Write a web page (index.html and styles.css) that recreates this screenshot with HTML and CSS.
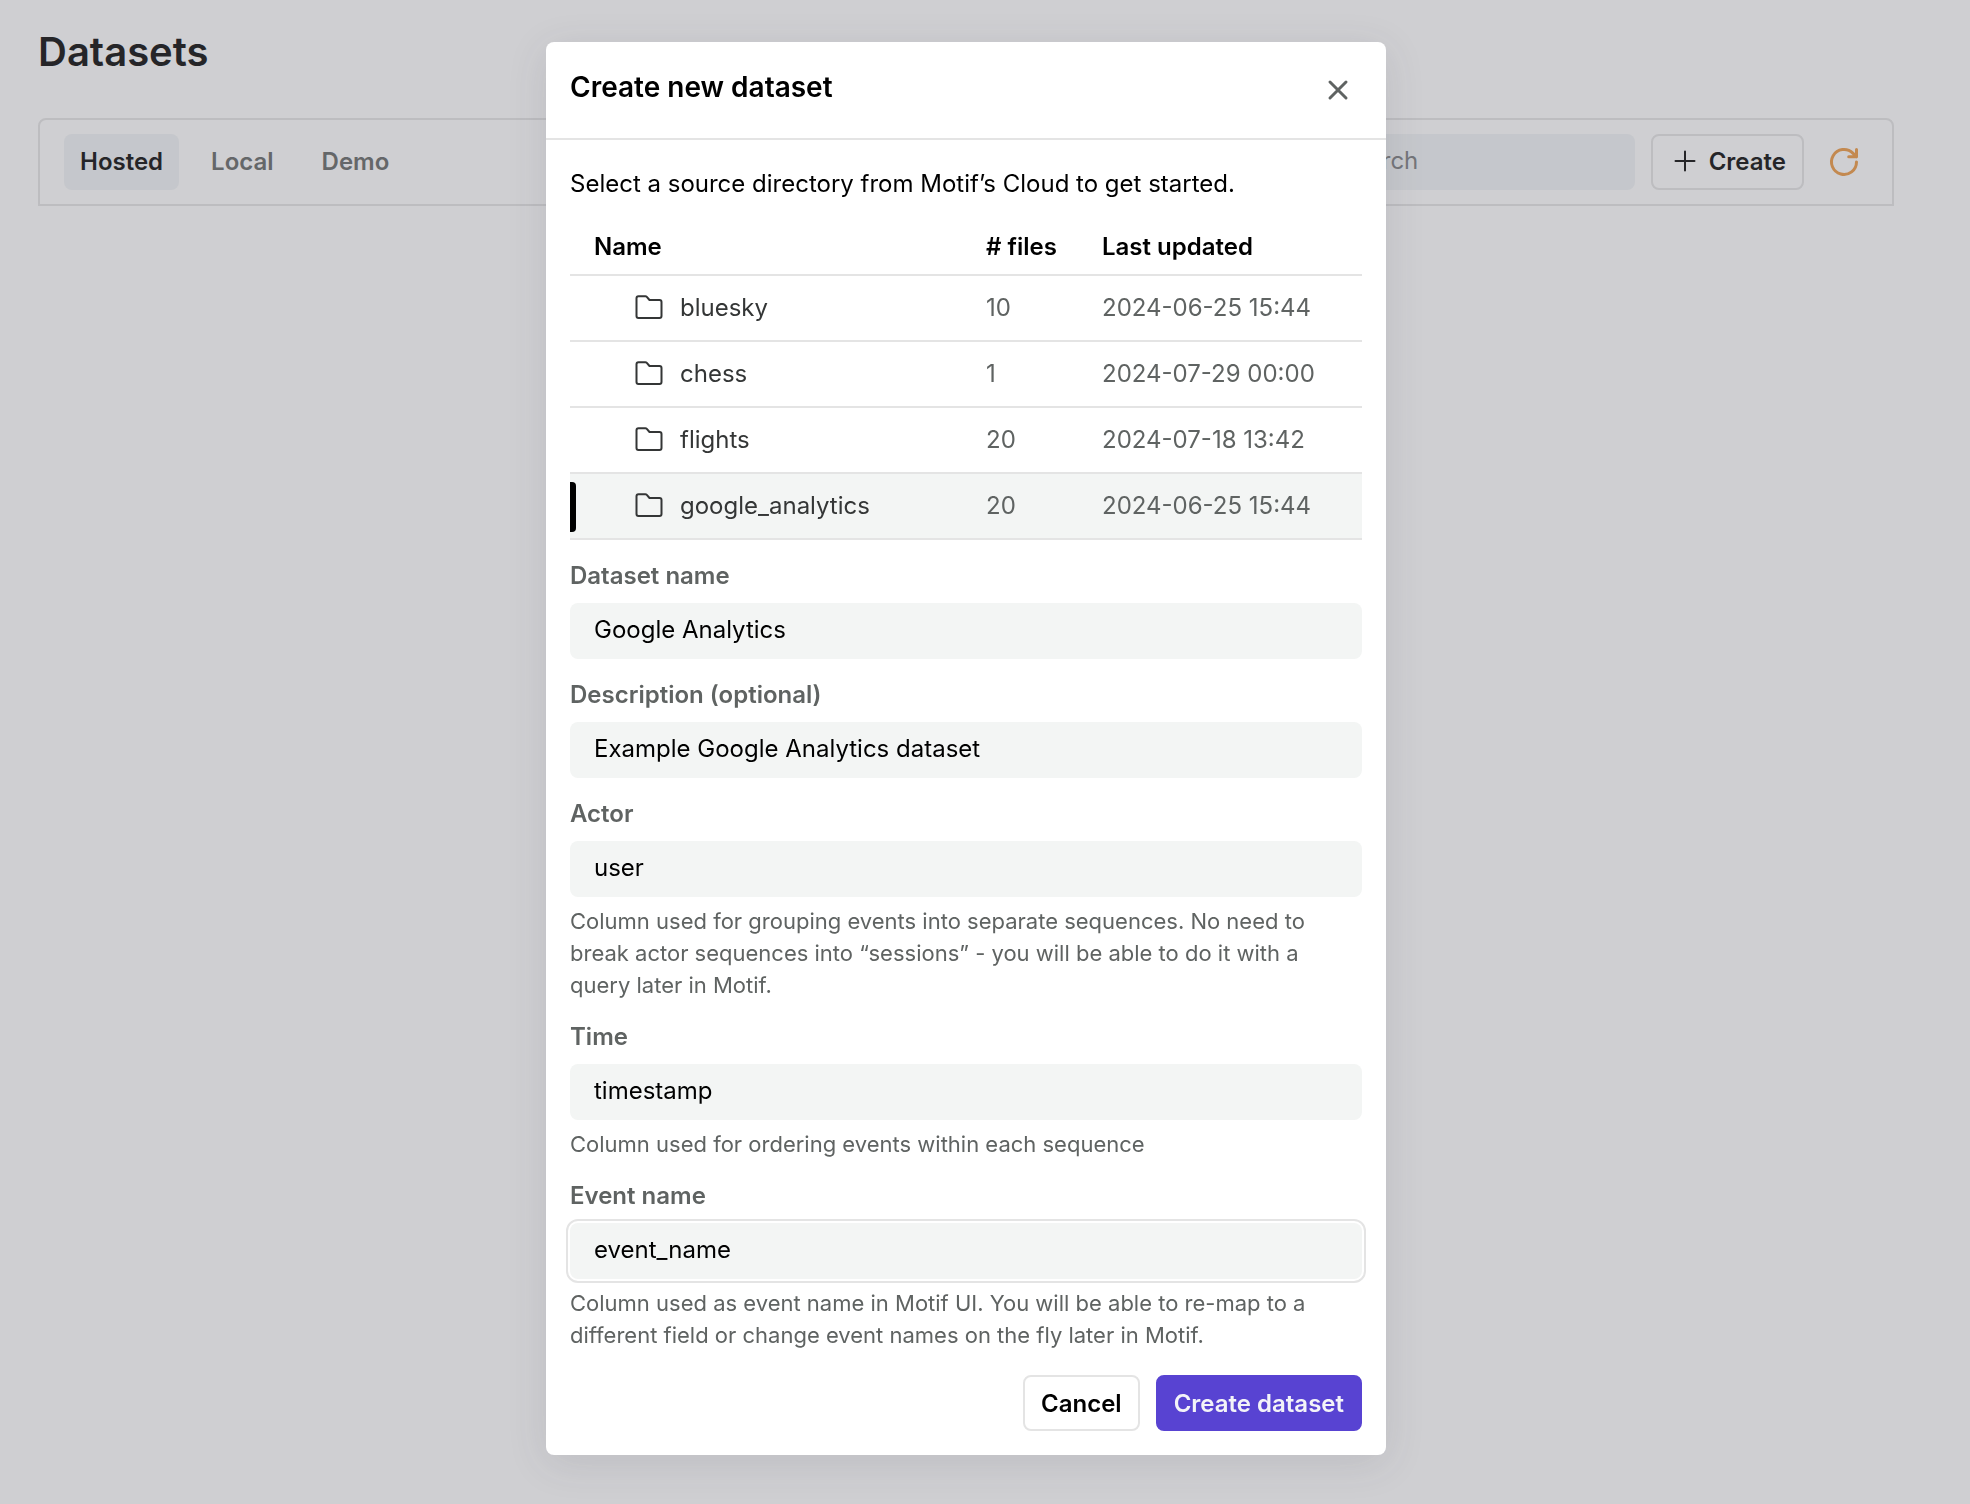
FILE: index.html
```html
<!DOCTYPE html>
<html lang="en">
<head>
<meta charset="utf-8">
<title>Datasets</title>
<link rel="stylesheet" href="styles.css">
</head>
<body>
<svg class="sprite" aria-hidden="true">
  <symbol id="folder" viewBox="0 0 30 32">
    <path d="M2.500 8V25a2 2 0 0 0 2 2h21a2 2 0 0 0 2-2V11a2 2 0 0 0-2-2H15.500l-2.700-3.100A2 2 0 0 0 11.300 5.200H4.500a2 2 0 0 0-2 2z"/>
  </symbol>
</svg>
<main class="page">
  <h1 class="page-title">Datasets</h1>
  <div class="toolbar">
    <nav class="tabs">
      <button class="tab tab-active" type="button">Hosted</button>
      <button class="tab" type="button">Local</button>
      <button class="tab" type="button">Demo</button>
    </nav>
    <input class="search" type="search" placeholder="Search" aria-label="Search datasets">
    <button class="button button-icon" type="button">
      <svg class="plus" viewBox="0 0 24 24" aria-hidden="true"><path d="M12 2.500v19M2.500 12h19"/></svg>
      Create
    </button>
    <button class="refresh" type="button" aria-label="Refresh">
      <svg class="refresh-icon" viewBox="0 0 32 32" aria-hidden="true"><path d="M28.500 16A12.500 12.500 0 1 1 24.800 7.100L28.500 10.800M28.500 3.500v7.300h-7.800"/></svg>
    </button>
  </div>
</main>
<div class="overlay">
  <form class="modal" role="dialog" aria-modal="true" aria-labelledby="modal-title">
    <header class="modal-header">
      <h2 class="modal-title" id="modal-title">Create new dataset</h2>
      <button class="close" type="button" aria-label="Close">
        <svg class="close-icon" viewBox="0 0 24 24" aria-hidden="true"><path d="M4 4l16 16M20 4l-16 16"/></svg>
      </button>
    </header>
    <div class="modal-body">
      <p class="intro">Select a source directory from Motif’s Cloud to get started.</p>
      <table class="sources">
        <colgroup><col class="col-name"><col class="col-files"><col></colgroup>
        <thead>
          <tr><th scope="col">Name</th><th scope="col"># files</th><th scope="col">Last updated</th></tr>
        </thead>
        <tbody>
          <tr><td><span class="source"><svg class="folder"><use href="#folder"/></svg>bluesky</span></td><td>10</td><td>2024-06-25 15:44</td></tr>
          <tr><td><span class="source"><svg class="folder"><use href="#folder"/></svg>chess</span></td><td>1</td><td>2024-07-29 00:00</td></tr>
          <tr><td><span class="source"><svg class="folder"><use href="#folder"/></svg>flights</span></td><td>20</td><td>2024-07-18 13:42</td></tr>
          <tr class="selected"><td><span class="source"><svg class="folder"><use href="#folder"/></svg>google_analytics</span></td><td>20</td><td>2024-06-25 15:44</td></tr>
        </tbody>
      </table>
      <div class="field">
        <label class="label" for="name">Dataset name</label>
        <input class="input" id="name" type="text" value="Google Analytics">
      </div>
      <div class="field">
        <label class="label" for="description">Description (optional)</label>
        <input class="input" id="description" type="text" value="Example Google Analytics dataset">
      </div>
      <div class="field">
        <label class="label" for="actor">Actor</label>
        <input class="input" id="actor" type="text" value="user">
        <p class="help">Column used for grouping events into separate sequences. No need to break actor sequences into “sessions” - you will be able to do it with a query later in Motif.</p>
      </div>
      <div class="field">
        <label class="label" for="time">Time</label>
        <input class="input" id="time" type="text" value="timestamp">
        <p class="help">Column used for ordering events within each sequence</p>
      </div>
      <div class="field">
        <label class="label" for="event">Event name</label>
        <input class="input input-focused" id="event" type="text" value="event_name">
        <p class="help">Column used as event name in Motif UI. You will be able to re-map to a different field or change event names on the fly later in Motif.</p>
      </div>
      <footer class="actions">
        <button class="button" type="button">Cancel</button>
        <button class="button button-primary" type="submit">Create dataset</button>
      </footer>
    </div>
  </form>
</div>
</body>
</html>
```
FILE: styles.css
```css
* {
  box-sizing: border-box;
}

body {
  margin: 0;
  background: #fff;
  color: #000;
  font: 400 24px/39px Inter, sans-serif;
}

h1, h2, p {
  margin: 0;
}

button, input {
  font: inherit;
  color: inherit;
}

button {
  cursor: pointer;
}

svg {
  fill: none;
  stroke: currentColor;
  stroke-linecap: round;
  stroke-linejoin: round;
}

.sprite {
  display: none;
}

.page {
  padding: 24px 76px 0 38px;
}

.page-title {
  margin-bottom: 38px;
  font-size: 40px;
  font-weight: 600;
  line-height: 56px;
}

.toolbar {
  display: flex;
  align-items: center;
  gap: 16px;
  padding: 14px 24px;
  border: 2px solid #e4e4e4;
  border-radius: 8px 8px 0 0;
}

.tabs {
  display: flex;
  gap: 16px;
  margin-right: auto;
}

.tab {
  height: 56px;
  padding: 0 16px 2px;
  border: 0;
  border-radius: 8px;
  background: none;
  color: #5f6362;
  font-weight: 600;
}

.tab-active {
  background: #f1f4f6;
  color: #000;
}

.search {
  width: 320px;
  height: 56px;
  padding: 0 24px 4px;
  border: 0;
  border-radius: 8px;
  background: #f1f4f6;
}

.search::placeholder {
  color: #77797b;
}

.button {
  display: flex;
  align-items: center;
  gap: 12px;
  height: 56px;
  padding: 0 16px;
  border: 2px solid #e4e4e4;
  border-radius: 8px;
  background: #fff;
  font-weight: 600;
}

.button-icon {
  padding: 0 16px 2px 20px;
}

.button-primary {
  border-color: #5843d2;
  background: #5843d2;
  color: #f3f3f8;
}

.plus {
  width: 24px;
  height: 24px;
  stroke-width: 2;
}

.refresh, .close {
  display: grid;
  place-items: center;
  width: 48px;
  height: 48px;
  padding: 0;
  border: 0;
  background: none;
}

.refresh {
  color: #ee973c;
}

.refresh-icon {
  width: 32px;
  height: 32px;
  stroke-width: 3;
}

.overlay {
  position: fixed;
  inset: 0;
  display: flex;
  align-items: flex-start;
  justify-content: center;
  padding: 42px 38px 42px 0;
  overflow: auto;
  background: rgba(112, 112, 120, 0.333);
}

.modal {
  width: 100%;
  max-width: 840px;
  border-radius: 8px;
  background: #fff;
  box-shadow: 0 8px 40px rgba(60, 60, 70, 0.12);
}

.modal-header {
  display: flex;
  align-items: flex-start;
  justify-content: space-between;
  padding: 24px;
  border-bottom: 2px solid #e4e4e4;
}

.modal-title {
  font-size: 28px;
  font-weight: 600;
  line-height: 42px;
}

.close {
  color: #5f6362;
}

.close-icon {
  width: 24px;
  height: 24px;
  stroke-width: 3;
}

.modal-body {
  display: flex;
  flex-direction: column;
  gap: 16px;
  padding: 24px;
}

.sources {
  width: 100%;
  table-layout: fixed;
  border-collapse: separate;
  border-spacing: 0;
}

.col-name {
  width: 392px;
}

.col-files {
  width: 116px;
}

.sources th {
  padding: 8px 0 8px 24px;
  border-bottom: 2px solid #e4e4e4;
  font-weight: 600;
  text-align: left;
  white-space: nowrap;
}

.sources td {
  height: 66px;
  padding: 0 0 2px 24px;
  border-bottom: 2px solid #e4e4e4;
  color: #5f6362;
  white-space: nowrap;
}

.source {
  display: flex;
  align-items: center;
  gap: 16px;
  padding-left: 40px;
  color: #343636;
}

.folder {
  width: 30px;
  height: 32px;
  stroke-width: 2;
}

.selected {
  position: relative;
  background: #f3f5f4;
}

.selected td:first-child::before {
  content: "";
  position: absolute;
  top: 8px;
  bottom: 8px;
  left: 0;
  width: 6px;
  border-radius: 0 4px 4px 0;
  background: #000;
}

.field {
  display: flex;
  flex-direction: column;
  gap: 8px;
}

.label {
  color: #5f6362;
  font-weight: 600;
}

.input {
  width: 100%;
  height: 56px;
  padding: 0 24px 4px;
  border: 0;
  border-radius: 8px;
  background: #f3f5f4;
}

.input-focused {
  outline: 2px solid #e4e4e4;
  outline-offset: 2px;
}

.help {
  color: #5f6362;
  font-size: 22px;
  line-height: 32px;
}

.actions {
  display: flex;
  justify-content: flex-end;
  gap: 16px;
  margin-top: 8px;
}
```
